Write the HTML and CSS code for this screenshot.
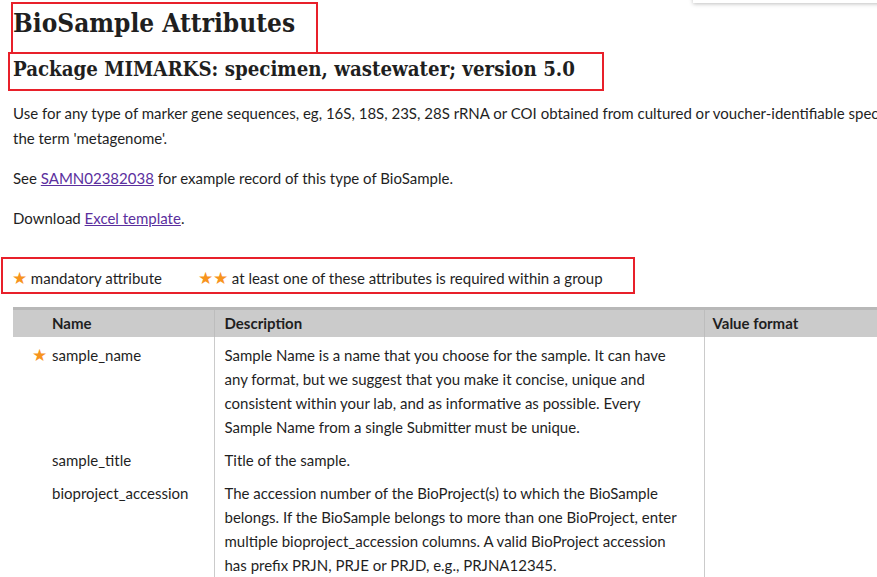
FILE: index.html
```html
<!DOCTYPE html>
<html lang="en">
<head>
<meta charset="utf-8">
<title>BioSample Attributes</title>
<link rel="stylesheet" href="styles.css">
</head>
<body>
<div class="popup"></div>
<main class="page">
  <h1 class="title"><span class="mark mark-title">BioSample Attributes</span></h1>
  <h2 class="subtitle"><span class="mark mark-sub">Package MIMARKS: specimen, wastewater; version 5.0</span></h2>
  <p class="intro">Use for any type of marker gene sequences, eg, 16S, 18S, 23S, 28S rRNA or COI obtained from cultured or voucher-identifiable specimens. Organism name should not include<br>the term 'metagenome'.</p>
  <p class="text">See <a href="#">SAMN02382038</a> for example record of this type of BioSample.</p>
  <p class="text">Download <a href="#">Excel template</a>.</p>
  <div class="legend">
    <span class="legend-item"><span class="star">★</span> mandatory attribute</span>
    <span class="legend-item"><span class="star">★★</span> at least one of these attributes is required within a group</span>
  </div>
  <table class="attrs">
    <colgroup>
      <col class="col-name">
      <col class="col-desc">
      <col class="col-val">
    </colgroup>
    <thead>
      <tr><th class="c-name">Name</th><th class="c-desc">Description</th><th class="c-val">Value format</th></tr>
    </thead>
    <tbody>
      <tr>
        <td class="c-name"><span class="star star-row">★</span>sample_name</td>
        <td class="c-desc">Sample Name is a name that you choose for the sample. It can have any format, but we suggest that you make it concise, unique and consistent within your lab, and as informative as possible. Every Sample Name from a single Submitter must be unique.</td>
        <td class="c-val"></td>
      </tr>
      <tr>
        <td class="c-name">sample_title</td>
        <td class="c-desc">Title of the sample.</td>
        <td class="c-val"></td>
      </tr>
      <tr>
        <td class="c-name">bioproject_accession</td>
        <td class="c-desc">The accession number of the BioProject(s) to which the BioSample belongs. If the BioSample belongs to more than one BioProject, enter multiple bioproject_accession columns. A valid BioProject accession has prefix PRJN, PRJE or PRJD, e.g., PRJNA12345.</td>
        <td class="c-val"></td>
      </tr>
    </tbody>
  </table>
</main>
</body>
</html>
```

FILE: styles.css
```css
html, body {
  margin: 0;
  padding: 0;
  overflow: hidden;
  background: #fff;
}
body {
  font-family: "Lato", "Liberation Sans", sans-serif;
  font-size: 15px;
  color: #1f1f1f;
  width: 877px;
  height: 577px;
  position: relative;
}
.popup {
  position: absolute;
  top: -20px;
  left: 693px;
  width: 200px;
  height: 23px;
  background: #fff;
  box-shadow: 0 1px 4px rgba(0,0,0,0.25);
}
.page {
  width: 1200px;
  padding: 0 0 0 13px;
}
.title {
  font-family: "DejaVu Serif", "Liberation Serif", serif;
  font-stretch: semi-condensed;
  font-weight: bold;
  font-size: 26px;
  margin: 0;
  padding-top: 6px;
  height: 49px;
  line-height: 34px;
}
.subtitle {
  font-family: "DejaVu Serif", "Liberation Serif", serif;
  font-stretch: semi-condensed;
  font-weight: bold;
  font-size: 20.3px;
  margin: 0;
  line-height: 28px;
  height: 46px;
}
.mark {
  position: relative;
}
.mark::after {
  content: "";
  position: absolute;
  border: 2px solid #e8202a;
  pointer-events: none;
}
.mark-title::after {
  left: -2px;
  top: -6px;
  width: 303px;
  height: 48px;
}
.mark-sub::after {
  left: -5px;
  top: -5px;
  width: 592px;
  height: 35px;
}
.intro {
  margin: 0;
  line-height: 25px;
  white-space: nowrap;
}
.text {
  margin: 15px 0 0;
  line-height: 25px;
}
.text a {
  color: #5b2f9e;
  text-decoration: underline;
}
.legend {
  display: flex;
  gap: 36px;
  margin: 26px 0 0 -12px;
  padding: 8px 0 3px 9px;
  width: 621px;
  border: 2px solid #e8202a;
  line-height: 22px;
}
.star {
  color: #f7941d;
  font-size: 17px;
}
.attrs {
  margin-top: 13px;
  border-collapse: collapse;
  table-layout: fixed;
  width: 1000px;
  line-height: 24px;
}
.col-name { width: 201px; }
.col-desc { width: 490px; }
.attrs th {
  background: #cbcbcb;
  border-top: 3px solid #b8b8b8;
  text-align: left;
  font-weight: bold;
  padding: 1px 8px 2px 10px;
  height: 24px;
}
.attrs td {
  vertical-align: top;
  padding: 6px 8px 3px 10px;
}
.attrs .c-name {
  padding-left: 39px;
  position: relative;
}
.attrs .c-desc {
  padding-right: 14px;
  border-left: 1px solid #cbcbcb;
  border-right: 1px solid #cbcbcb;
}
.attrs th.c-desc {
  border-left-color: #bdbdbd;
  border-right-color: #bdbdbd;
}
.attrs .c-val {
  padding-left: 8px;
}
.star-row {
  position: absolute;
  left: 19px;
}
```
